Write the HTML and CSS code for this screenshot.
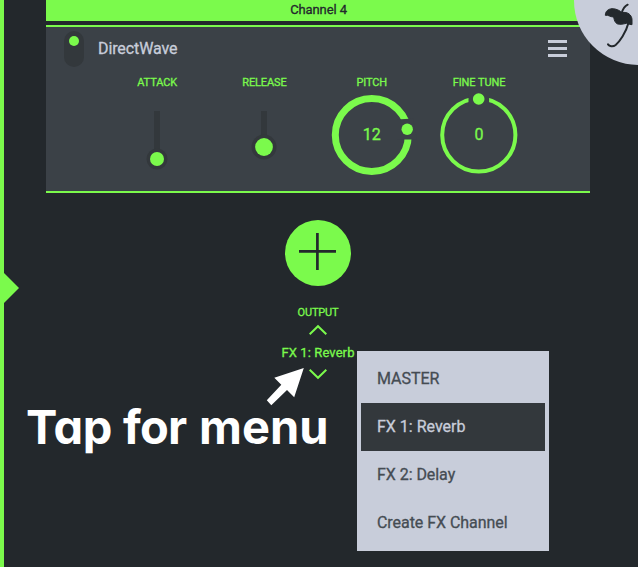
FILE: index.html
```html
<!DOCTYPE html>
<html lang="en">
<head>
<meta charset="utf-8">
<title>Channel 4</title>
<link rel="stylesheet" href="styles.css">
</head>
<body>
<div class="app">
  <main class="rack">
    <header class="channel"><span>Channel 4</span></header>
    <section class="module">
      <div class="module-head">
        <div class="toggle"><i></i></div>
        <h1><span>DirectWave</span></h1>
        <div class="burger"><i></i><i></i><i></i></div>
      </div>
      <div class="controls">
        <div class="control"><label class="attack">ATTACK</label>
          <svg width="100" height="90" viewBox="0 0 100 90"><path class="track" d="M50 21v48"/><circle class="well" cx="50" cy="69" r="10.5"/><circle class="lit" cx="50" cy="69" r="7"/></svg>
        </div>
        <div class="control"><label class="release">RELEASE</label>
          <svg width="100" height="90" viewBox="0 0 100 90"><path class="track" d="M50 21v36"/><circle class="well" cx="50" cy="57" r="12.5"/><circle class="lit" cx="50" cy="57" r="8.9"/></svg>
        </div>
        <div class="control"><label class="pitch">PITCH</label>
          <svg width="100" height="90" viewBox="0 0 100 90"><circle class="ring thick" cx="49.8" cy="45" r="36.5"/><path class="gap" d="M75 29.5l16-1 4 21H75z"/><circle class="lit" cx="85.2" cy="39.3" r="5.7"/></svg>
          <output>12</output>
        </div>
        <div class="control"><label class="fine">FINE TUNE</label>
          <svg width="100" height="90" viewBox="0 0 100 90"><circle class="ring" cx="49.8" cy="45" r="36.6"/><path class="gap" d="M39.5 3h20.6v14H39.5z"/><circle class="lit" cx="49.7" cy="9" r="5.8"/></svg>
          <output>0</output>
        </div>
      </div>
    </section>
    <button class="add"><svg width="66" height="66" viewBox="0 0 66 66"><path d="M14 31.4h37M32.4 13v37"/></svg></button>
    <div class="output">
      <span class="caption">OUTPUT</span>
      <svg width="20" height="12" viewBox="0 0 20 12"><path d="M1.7 10.2L10 2.2l8.3 8"/></svg>
      <span class="value">FX 1: Reverb</span>
      <svg width="20" height="12" viewBox="0 0 20 12"><path d="M1.7 1.8L10 9.8l8.3-8"/></svg>
    </div>
  </main>
  <div class="marker"></div>
  <div class="corner">
    <svg width="70" height="70" viewBox="0 0 210 210"><path class="stem" d="M179 14Q166 20 161 40M181 70C174 98 154 126 143 135C134 142 124 139 120 133"/><path class="canopy" d="M112 46C112 33 121 27 132 26C145 26 156 32 162 38C179 34 191 45 192 58L192 74L184 73L176 70L160 73L149 72C141 68 139 62 137 51L130 50L119 46Z"/></svg>
  </div>
  <nav class="menu">
    <a class="m1"><span>MASTER</span></a>
    <a class="m2 selected"><span>FX 1: Reverb</span></a>
    <a class="m3"><span>FX 2: Delay</span></a>
    <a class="m4"><span>Create FX Channel</span></a>
  </nav>
  <svg class="pointer" width="40" height="40" viewBox="266 367 40 40"><path d="M303.8 368L274.3 377.7L281.3 384.7L266.8 400.3L271.3 405.2L287 390L294.2 397.3Z"/></svg>
  <p class="note"><span class="w1">Tap</span><span class="w2">for</span><span class="w3">menu</span></p>
</div>
</body>
</html>
```
FILE: styles.css
```css
* { box-sizing: border-box; }
body { margin: 0; background: #23282c; font-family: Roboto, "Liberation Sans", sans-serif; overflow: hidden; }
.app { position: relative; width: 638px; height: 567px; overflow: hidden; border-left: 4px solid #7bfa4c; -webkit-text-stroke: 0.3px; }
.rack { width: 544px; margin-left: 42px; display: flex; flex-direction: column; align-items: center; }
.channel { width: 100%; height: 21px; background: #7bfa4c; color: #23282c; font-size: 13px; line-height: 19px; padding-left: 1px; letter-spacing: -0.1px; text-align: center; }
.module { width: 100%; height: 168px; margin-top: 4px; background: #3b4147; border-top: 2px solid #7bfa4c; border-bottom: 2px solid #7bfa4c; }
.module-head { height: 44px; padding: 4px 23px 0 18px; display: flex; align-items: flex-start; }
.toggle { width: 20px; height: 36px; padding: 5px; border-radius: 10px; background: #33383c; }
.toggle i { display: block; width: 10px; height: 10px; border-radius: 50%; background: #7bfa4c; }
h1 { flex: 1; margin: 8px 0 0 14px; color: #c8cdda; font-size: 16px; line-height: 20px; font-weight: 400; letter-spacing: -0.1px; }
.burger { width: 19px; margin-top: 9px; display: grid; gap: 4px; }
.burger i { height: 3px; background: #c8cdda; }
.controls { padding-left: 57.5px; display: grid; grid-template-columns: repeat(4, 107.3px); }
.control { position: relative; display: flex; flex-direction: column; align-items: center; color: #7bfa4c; }
label { height: 19px; font-size: 11px; line-height: 23px; letter-spacing: -0.1px; white-space: nowrap; }
.control svg { display: block; }
output { position: absolute; top: 54px; left: 0; width: 100%; text-align: center; font-size: 16px; line-height: 20px; }
.track { stroke: #33383c; stroke-width: 6; }
.well { fill: #33383c; }
.lit { fill: #7bfa4c; }
.ring { fill: none; stroke: #7bfa4c; stroke-width: 4; }
.thick { stroke-width: 7; }
.gap { fill: #3b4147; }
.add { width: 66px; height: 66px; margin-top: 27px; padding: 0; border: 0; border-radius: 50%; background: #7bfa4c; }
.add svg { display: block; }
.add path { stroke: #23282c; stroke-width: 2.7; }
.output { margin-top: 18px; display: flex; flex-direction: column; align-items: center; color: #7bfa4c; }
.caption { font-size: 11px; height: 16px; line-height: 17px; letter-spacing: -0.15px; }
.output svg { margin: 4px 0; }
.output path { fill: none; stroke: #7bfa4c; stroke-width: 2; }
.value { font-size: 13px; height: 24px; line-height: 25px; letter-spacing: 0.1px; white-space: nowrap; }
.marker { position: absolute; left: 0; top: 273px; border: solid transparent; border-width: 15px 0 15px 15px; border-left-color: #7bfa4c; }
.corner { position: absolute; right: -64.5px; top: -64.5px; width: 129px; height: 129px; border-radius: 50%; background: #c8cdda; }
.corner svg { position: absolute; left: -5.5px; top: 64.5px; }
.stem { fill: none; stroke: #23282c; stroke-width: 6; stroke-linecap: round; }
.canopy { fill: #23282c; stroke: #23282c; stroke-width: 3; stroke-linejoin: round; }
.menu { position: absolute; left: 353px; top: 351px; width: 192px; height: 200px; padding: 4px; background: #c8cdda; }
.menu a { display: block; height: 48px; padding-left: 16px; color: #454c53; font-size: 16px; line-height: 47px; letter-spacing: -0.05px; white-space: nowrap; }
.menu .selected { background: #33383c; color: #c8cdda; letter-spacing: 0; }
.pointer { position: absolute; left: 262px; top: 367px; fill: #fff; }
.note { position: absolute; left: 22px; top: 397px; margin: 0; display: flex; color: #fff; font: 700 47px/60px Inter, Lato, sans-serif; font-feature-settings: "cv11" 1; -webkit-text-stroke: 0; }
.note span { display: block; }
.w1 { width: 97px; letter-spacing: -0.3px; }
.w2 { width: 76px; letter-spacing: -0.8px; }
```
